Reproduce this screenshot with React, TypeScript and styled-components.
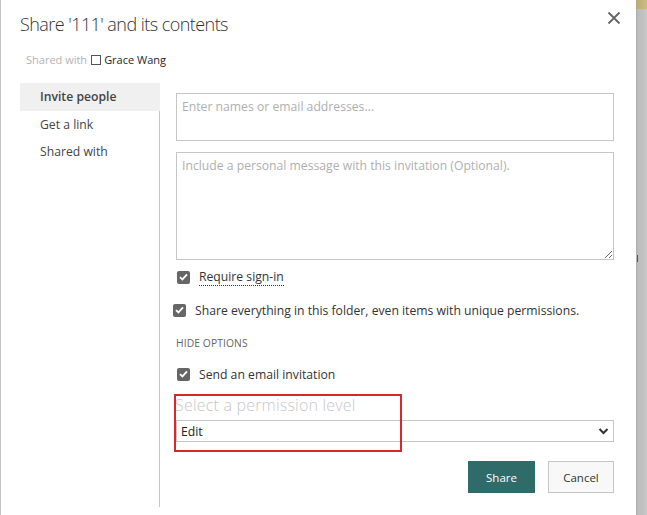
import React from "react";
import styled, { createGlobalStyle } from "styled-components";

const Global = createGlobalStyle`
  html, body { margin: 0; padding: 0; background: #fff; overflow: hidden; }
  * { box-sizing: border-box; }
  body { font-family: "Open Sans", "Noto Sans", "Liberation Sans", sans-serif; color: #333; }
`;

const Page = styled.div`
  display: flex;
  width: 647px;
  height: 515px;
`;

const Dialog = styled.div`
  flex: 1;
  display: flex;
  flex-direction: column;
  border-left: 1px solid #c4c4c4;
  padding-right: 22px;
  position: relative;
`;

const RightStrip = styled.div`
  width: 11px;
  background: linear-gradient(to right, #adadad 0px, #bdbdbd 2px, #c2c2c2 8px, #cacaca 11px);
  position: relative;
  &::before {
    content: "";
    position: absolute;
    left: 0; right: 0; top: 0; height: 9px;
    background: linear-gradient(to right, #b8aa74, #cbbd83);
  }
  &::after {
    content: "";
    position: absolute;
    left: 1px; top: 255px; width: 1px; height: 7px;
    background: #555;
  }
`;

const Header = styled.div`
  display: flex;
  justify-content: space-between;
  align-items: flex-start;
  padding: 11px 0 0 19px;
  height: 52px;
`;

const Title = styled.h1`
  margin: 0;
  font-size: 18px;
  font-weight: 300;
  line-height: 26px;
  color: #333;
  letter-spacing: -0.55px;
`;

const CloseButton = styled.button`
  border: 0;
  background: none;
  padding: 0;
  margin: 0 -7px 0 0;
  width: 14px;
  height: 14px;
  display: flex;
  cursor: pointer;
`;

const SharedRow = styled.div`
  display: flex;
  align-items: center;
  padding-left: 25px;
  height: 16px;
  font-size: 11px;
  line-height: 16px;
  gap: 3px;
`;

const Muted = styled.span`
  color: #b3b3b3;
`;

const SmallBox = styled.span`
  display: inline-block;
  width: 10px;
  height: 10px;
  border: 1px solid #555;
  margin: 0 0 0 1px;
`;

const Person = styled.span`
  color: #262626;
`;

const Body = styled.div`
  display: flex;
  margin-top: 15px;
  margin-left: 19px;
  height: 424px;
`;

const Nav = styled.nav`
  width: 140px;
  border-right: 1px solid #c8c8c8;
  display: flex;
  flex-direction: column;
`;

const NavItem = styled.div<{ $active?: boolean }>`
  height: 27.5px;
  line-height: 27px;
  padding-left: 20px;
  font-size: 12.2px;
  color: #444;
  font-weight: ${(p) => (p.$active ? 600 : 400)};
  background: ${(p) => (p.$active ? "#f0f0f0" : "transparent")};
  margin-right: -1px;
`;

const Main = styled.div`
  flex: 1;
  display: flex;
  flex-direction: column;
  padding: 10px 0 0 16px;
`;

const fieldBase = `
  width: 100%;
  border: 1px solid #c6c6c6;
  font-family: "Open Sans", "Noto Sans", sans-serif;
  font-size: 12.2px;
  color: #333;
  padding: 4px 5px;
  outline: none;
  &::placeholder { color: #b0b0b0; }
`;

const NamesInput = styled.textarea`
  ${fieldBase}
  height: 48px;
  resize: none;
  line-height: 18px;
`;

const MessageInput = styled.textarea`
  ${fieldBase}
  height: 108px;
  margin-top: 11px;
  line-height: 18px;
  resize: vertical;
`;

const CheckRow = styled.label<{ $mt: number; $shift?: number }>`
  display: flex;
  align-items: center;
  height: 20px;
  margin-top: ${(p) => p.$mt}px;
  margin-left: ${(p) => p.$shift ?? 1}px;
  font-size: 12.2px;
  color: #333;
  gap: 9px;
`;

const Box = styled.span`
  width: 13px;
  height: 13px;
  border-radius: 2px;
  background: #666;
  display: flex;
  align-items: center;
  justify-content: center;
  flex: none;
`;

const Dotted = styled.span`
  border-bottom: 1px dotted #333;
  line-height: 16px;
`;

const SectionLabel = styled.div`
  margin-top: 15px;
  height: 16px;
  line-height: 16px;
  font-size: 10.3px;
  color: #666;
  letter-spacing: 0.1px;
`;

const Permission = styled.div`
  margin-top: 12px;
  position: relative;
  display: flex;
  flex-direction: column;
`;

const PermissionLabel = styled.div`
  font-size: 16px;
  font-weight: 300;
  line-height: 18px;
  color: #c8c8c8;
  letter-spacing: 0.2px;
  margin-left: -1px;
`;

const Select = styled.div`
  margin-top: 6px;
  height: 22px;
  border: 1px solid #c6c6c6;
  display: flex;
  align-items: center;
  justify-content: space-between;
  padding: 0 4px 0 4px;
  font-size: 12.2px;
  color: #222;
`;

const Highlight = styled.div`
  position: absolute;
  left: -2px;
  top: -2px;
  width: 228px;
  height: 58px;
  border: 2px solid #d9262d;
  pointer-events: none;
`;

const Actions = styled.div`
  margin-top: 19px;
  display: flex;
  justify-content: flex-end;
  gap: 13px;
`;

const Button = styled.button<{ $primary?: boolean }>`
  height: 32px;
  width: ${(p) => (p.$primary ? 67 : 66)}px;
  font-family: "Open Sans", "Noto Sans", sans-serif;
  font-size: 11.5px;
  border: 1px solid ${(p) => (p.$primary ? "#2f6b68" : "#c6c6c6")};
  background: ${(p) => (p.$primary ? "#2f6b68" : "#f8f8f8")};
  color: ${(p) => (p.$primary ? "#fff" : "#333")};
  padding: 0;
`;

const Check = () => (
  <svg width="9" height="8" viewBox="0 0 9 8">
    <path d="M1 4.2 L3.4 6.4 L8 1.4" fill="none" stroke="#fff" strokeWidth="1.8" />
  </svg>
);

export default function App() {
  return (
    <>
      <Global />
      <Page>
        <Dialog>
          <Header>
            <Title>Share '111' and its contents</Title>
            <CloseButton aria-label="Close">
              <svg width="14" height="14" viewBox="0 0 14 14">
                <path d="M1.5 1.5 L12.5 12.5 M12.5 1.5 L1.5 12.5" stroke="#666" strokeWidth="1.8" />
              </svg>
            </CloseButton>
          </Header>
          <SharedRow>
            <Muted>Shared with</Muted>
            <SmallBox />
            <Person>Grace Wang</Person>
          </SharedRow>
          <Body>
            <Nav>
              <NavItem $active>Invite people</NavItem>
              <NavItem>Get a link</NavItem>
              <NavItem>Shared with</NavItem>
            </Nav>
            <Main>
              <NamesInput placeholder="Enter names or email addresses..." />
              <MessageInput placeholder="Include a personal message with this invitation (Optional)." />
              <CheckRow $mt={7}>
                <Box><Check /></Box>
                <Dotted>Require sign-in</Dotted>
              </CheckRow>
              <CheckRow $mt={13} $shift={-3}>
                <Box><Check /></Box>
                <span>Share everything in this folder, even items with unique permissions.</span>
              </CheckRow>
              <SectionLabel>HIDE OPTIONS</SectionLabel>
              <CheckRow $mt={13}>
                <Box><Check /></Box>
                <span>Send an email invitation</span>
              </CheckRow>
              <Permission>
                <PermissionLabel>Select a permission level</PermissionLabel>
                <Select>
                  <span>Edit</span>
                  <svg width="11" height="8" viewBox="0 0 11 8">
                    <path d="M1.5 2 L5.5 6 L9.5 2" fill="none" stroke="#333" strokeWidth="2" />
                  </svg>
                </Select>
                <Highlight />
              </Permission>
              <Actions>
                <Button $primary>Share</Button>
                <Button>Cancel</Button>
              </Actions>
            </Main>
          </Body>
        </Dialog>
        <RightStrip />
      </Page>
    </>
  );
}
